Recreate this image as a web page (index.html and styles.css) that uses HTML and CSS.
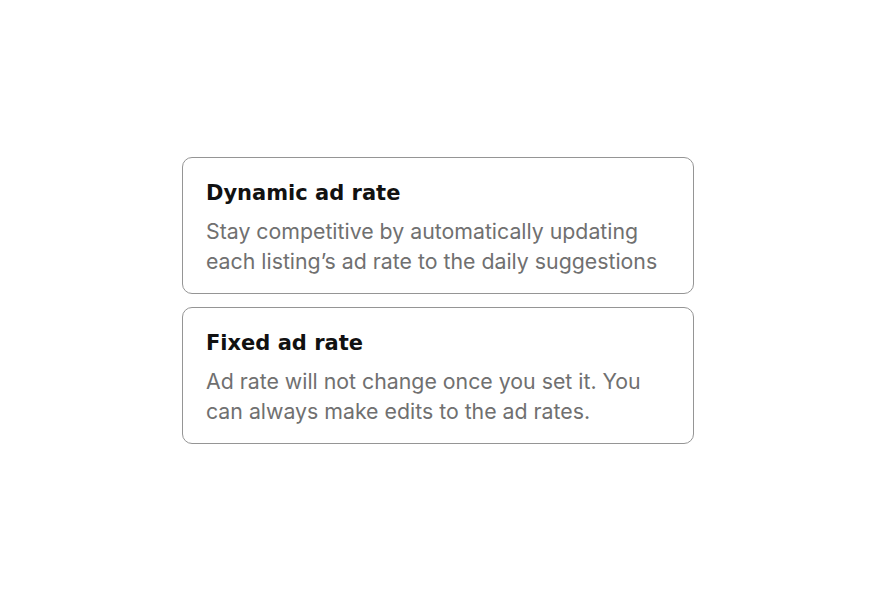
FILE: index.html
```html
<!DOCTYPE html>
<html lang="en">
<head>
<meta charset="utf-8">
<link rel="stylesheet" href="styles.css">
</head>
<body>
<main class="options">
  <div class="card">
    <h2 class="card-title">Dynamic ad rate</h2>
    <p class="card-text">Stay competitive by automatically updating each listing’s ad rate to the daily suggestions</p>
  </div>
  <div class="card">
    <h2 class="card-title">Fixed ad rate</h2>
    <p class="card-text">Ad rate will not change once you set it. You can always make edits to the ad rates.</p>
  </div>
</main>
</body>
</html>
```

FILE: styles.css
```css
html, body {
  margin: 0;
  padding: 0;
  background: #ffffff;
}
body {
  font-family: Inter, "Noto Sans", sans-serif;
  height: 600px;
  display: flex;
  align-items: center;
  justify-content: center;
}
.options {
  display: flex;
  flex-direction: column;
  gap: 13px;
  width: 512px;
}
.card {
  box-sizing: border-box;
  border: 1px solid #959595;
  border-radius: 10px;
  padding: 21px 30px 17px 23px;
}
.card-title {
  margin: 0;
  font-family: "DejaVu Sans", Inter, sans-serif;
  font-size: 21px;
  line-height: 28px;
  font-weight: 700;
  color: #111111;
}
.card-text {
  margin: 9px 0 0;
  font-size: 21.3px;
  line-height: 30px;
  color: #707070;
}
```
